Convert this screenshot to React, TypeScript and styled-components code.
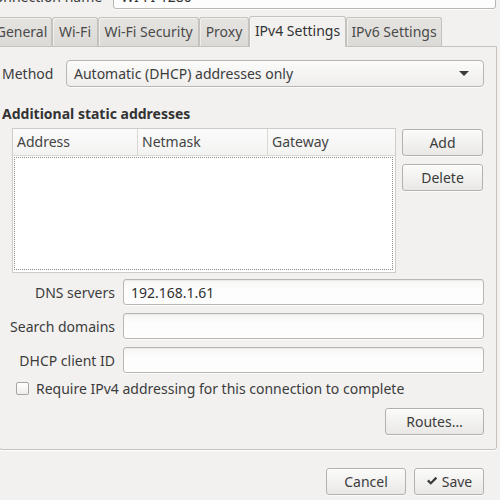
import styled, { createGlobalStyle } from "styled-components";

const GlobalStyle = createGlobalStyle`
  html, body {
    margin: 0;
    padding: 0;
    background: #f2f1f0;
  }
  body {
    font-family: "Noto Sans", "Open Sans", "DejaVu Sans", sans-serif;
    font-size: 14px;
    color: #3c3c3c;
  }
  * {
    box-sizing: border-box;
  }
`;

const Window = styled.div`
  width: 500px;
  height: 500px;
  overflow: hidden;
  background: #f2f1f0;
`;

const NameRow = styled.div`
  display: flex;
  align-items: center;
  gap: 13px;
  margin-top: -17px;
  margin-left: -14px;
  padding-right: 4px;
  height: 26px;
`;

const NameLabel = styled.span`
  width: 114px;
  text-align: right;
  white-space: nowrap;
`;

const Entry = styled.div`
  flex: 1;
  height: 26px;
  display: flex;
  align-items: center;
  padding: 0 7px;
  border: 1px solid #bab7b3;
  border-radius: 3px;
  background: linear-gradient(#f6f6f5, #fdfdfd 40%);
  box-shadow: inset 0 1px 1px rgba(0, 0, 0, 0.06), 0 1px 0 rgba(255, 255, 255, 0.7);
  color: #303030;
  white-space: nowrap;
`;

const TabBar = styled.div`
  display: flex;
  align-items: flex-end;
  height: 29px;
  margin-top: 8px;
  margin-left: -9px;
`;

const Tab = styled.div<{ $width: number; $active?: boolean }>`
  width: ${(p) => p.$width}px;
  height: ${(p) => (p.$active ? 31 : 29)}px;
  margin-bottom: ${(p) => (p.$active ? -1 : 0)}px;
  position: relative;
  z-index: ${(p) => (p.$active ? 1 : 0)};
  display: flex;
  align-items: center;
  justify-content: center;
  padding-bottom: ${(p) => (p.$active ? 3 : 1)}px;
  border: 1px solid #c5c2be;
  border-bottom: none;
  border-radius: 3px 3px 0 0;
  background: ${(p) =>
    p.$active ? "#f2f1f0" : "linear-gradient(#e6e4e1, #dcdad6)"};
  box-shadow: inset 1px 1px 0 rgba(255, 255, 255, 0.5);
  color: ${(p) => (p.$active ? "#333" : "#4a4a4a")};
  white-space: nowrap;
`;

const Panel = styled.div`
  height: 404px;
  margin: 0 3px 0 -1px;
  padding: 13px 12px 0 2px;
  border: 1px solid #c5c2be;
  border-radius: 0 0 3px 3px;
  box-shadow: 0 1px 0 #ffffff;
  display: flex;
  flex-direction: column;
`;

const MethodRow = styled.div`
  display: flex;
  align-items: center;
  gap: 17px;
  height: 27px;
`;

const MethodLabel = styled.span`
  width: 47px;
  white-space: nowrap;
`;

const Combo = styled.div`
  flex: 1;
  height: 27px;
  display: flex;
  align-items: center;
  justify-content: space-between;
  padding: 0 14px 0 7px;
  border: 1px solid #b9b6b2;
  border-radius: 4px;
  background: linear-gradient(#fbfbfb, #efeeec);
  box-shadow: 0 1px 0 rgba(255, 255, 255, 0.8);
`;

const Arrow = styled.span`
  width: 0;
  height: 0;
  border-left: 5px solid transparent;
  border-right: 5px solid transparent;
  border-top: 5px solid #3c3c3c;
`;

const SectionTitle = styled.div`
  margin-top: 18px;
  line-height: 17px;
  font-weight: bold;
  color: #333;
`;

const TableRow = styled.div`
  display: flex;
  gap: 6px;
  margin-top: 6px;
  margin-left: 10px;
`;

const Table = styled.div`
  width: 384px;
  height: 145px;
  border: 1px solid #cfccc8;
  background: #ffffff;
  display: flex;
  flex-direction: column;
`;

const TableHead = styled.div`
  display: grid;
  grid-template-columns: 125px 130px 1fr;
  height: 27px;
  border-bottom: 1px solid #d9d6d2;
  background: linear-gradient(#fbfbfb, #f3f3f2);
`;

const HeadCell = styled.div<{ $last?: boolean }>`
  display: flex;
  align-items: center;
  padding-left: 4px;
  padding-bottom: 1px;
  border-right: ${(p) => (p.$last ? "none" : "1px solid #dcd9d5")};
  color: #444;
`;

const TableBody = styled.div`
  flex: 1;
  margin: 1px 2px 2px 1px;
  border: 1px dotted #8a8a8a;
`;

const ButtonColumn = styled.div`
  display: flex;
  flex-direction: column;
  gap: 8px;
  margin-top: 1px;
`;

const Button = styled.div<{ $width: number }>`
  width: ${(p) => p.$width}px;
  height: 27px;
  display: flex;
  align-items: center;
  justify-content: center;
  gap: 4px;
  padding-bottom: 1px;
  border: 1px solid #b4b1ac;
  border-radius: 3px;
  background: linear-gradient(#fbfbfa, #e9e8e6);
  box-shadow: 0 1px 0 rgba(255, 255, 255, 0.7), inset 0 1px 0 #ffffff;
  color: #3c3c3c;
  white-space: nowrap;
`;

const Form = styled.div`
  display: flex;
  flex-direction: column;
  gap: 8px;
  margin-top: 6px;
`;

const FormRow = styled.div`
  display: flex;
  align-items: center;
  gap: 8px;
`;

const FormLabel = styled.span`
  width: 113px;
  text-align: right;
  white-space: nowrap;
`;

const CheckRow = styled.label`
  display: flex;
  align-items: center;
  gap: 7px;
  margin-top: 7px;
  margin-left: 14px;
  height: 17px;
  white-space: nowrap;
`;

const CheckBox = styled.span`
  width: 13px;
  height: 13px;
  border: 1px solid #a9a6a2;
  border-radius: 2px;
  background: linear-gradient(#ffffff, #eeedeb);
`;

const RoutesRow = styled.div`
  display: flex;
  justify-content: flex-end;
  margin-top: 11px;
`;

const Footer = styled.div`
  display: flex;
  justify-content: flex-end;
  gap: 8px;
  margin-top: 18px;
  padding-right: 16px;
`;

const CheckIcon = () => (
  <svg width="12" height="10" viewBox="0 0 12 10">
    <path d="M1 5.2 L2.8 3.6 L4.8 5.8 L9.6 0.8 L11.2 2.4 L4.8 8.8 Z" fill="#3c3c3c" />
  </svg>
);

const tabs = [
  { label: "General", width: 61 },
  { label: "Wi-Fi", width: 46 },
  { label: "Wi-Fi Security", width: 101 },
  { label: "Proxy", width: 50 },
  { label: "IPv4 Settings", width: 97, active: true },
  { label: "IPv6 Settings", width: 96 },
];

const fields = [
  { label: "DNS servers", value: "192.168.1.61" },
  { label: "Search domains", value: "" },
  { label: "DHCP client ID", value: "" },
];

export default function App() {
  return (
    <Window>
      <GlobalStyle />
      <NameRow>
        <NameLabel>Connection name</NameLabel>
        <Entry>WI-FI-1280</Entry>
      </NameRow>
      <TabBar>
        {tabs.map((t) => (
          <Tab key={t.label} $width={t.width} $active={t.active}>
            {t.label}
          </Tab>
        ))}
      </TabBar>
      <Panel>
        <MethodRow>
          <MethodLabel>Method</MethodLabel>
          <Combo>
            <span>Automatic (DHCP) addresses only</span>
            <Arrow />
          </Combo>
        </MethodRow>
        <SectionTitle>Additional static addresses</SectionTitle>
        <TableRow>
          <Table>
            <TableHead>
              <HeadCell>Address</HeadCell>
              <HeadCell>Netmask</HeadCell>
              <HeadCell $last>Gateway</HeadCell>
            </TableHead>
            <TableBody />
          </Table>
          <ButtonColumn>
            <Button $width={81}>Add</Button>
            <Button $width={81}>Delete</Button>
          </ButtonColumn>
        </TableRow>
        <Form>
          {fields.map((f) => (
            <FormRow key={f.label}>
              <FormLabel>{f.label}</FormLabel>
              <Entry>{f.value}</Entry>
            </FormRow>
          ))}
        </Form>
        <CheckRow>
          <CheckBox />
          <span>Require IPv4 addressing for this connection to complete</span>
        </CheckRow>
        <RoutesRow>
          <Button $width={99}>Routes…</Button>
        </RoutesRow>
      </Panel>
      <Footer>
        <Button $width={80}>Cancel</Button>
        <Button $width={70}>
          <CheckIcon />
          Save
        </Button>
      </Footer>
    </Window>
  );
}
